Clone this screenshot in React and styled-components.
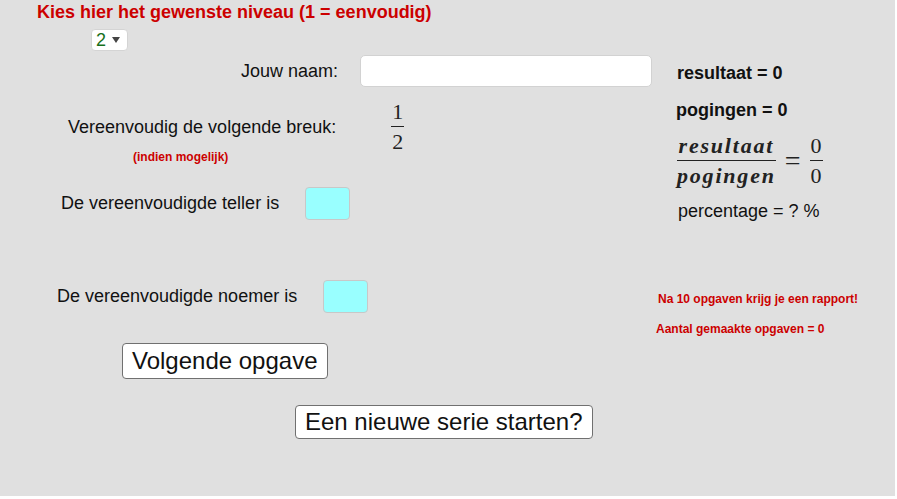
import React from 'react'
import styled, {createGlobalStyle} from 'styled-components'

const Global = createGlobalStyle`
    body {
        margin: 0;
        background: white;
        font-family: "Liberation Sans", Arial, sans-serif;
    }
`

export default function App()
{
    return (
        <>
            <Global />
            <Canvas>
                <LeftPane>
                    <Title>Kies hier het gewenste niveau (1 = eenvoudig)</Title>
                    <Select>
                        <SelectValue>2</SelectValue>
                        <Caret />
                    </Select>

                    <Row top={4} height={32} indent={241} gap={22}>
                        <Label>Jouw naam:</Label>
                        <NameInput />
                    </Row>

                    <Row top={14} height={52} indent={68} gap={55}>
                        <Label>Vereenvoudig de volgende breuk:</Label>
                        <Fraction size={22}>
                            <Num>1</Num>
                            <Den>2</Den>
                        </Fraction>
                    </Row>
                    <Hint top={-3} indent={133}>(indien mogelijk)</Hint>

                    <Row top={23} height={33} indent={61} gap={26}>
                        <Label>De vereenvoudigde teller is</Label>
                        <AnswerBox />
                    </Row>

                    <Row top={60} height={33} indent={57} gap={26}>
                        <Label>De vereenvoudigde noemer is</Label>
                        <AnswerBox />
                    </Row>

                    <Button top={30} indent={122} height={36}>Volgende opgave</Button>
                    <Button top={26} indent={295} height={34}>Een nieuwe serie starten?</Button>
                </LeftPane>

                <RightPane>
                    <Stat top={63} indent={21} bold>resultaat = 0</Stat>
                    <Stat top={17} indent={20} bold>pogingen = 0</Stat>
                    <Equation>
                        <Fraction size={22} italic>
                            <Num>resultaat</Num>
                            <Den>pogingen</Den>
                        </Fraction>
                        <Equals>=</Equals>
                        <Fraction size={22}>
                            <Num>0</Num>
                            <Den>0</Den>
                        </Fraction>
                    </Equation>
                    <Stat top={14} indent={22}>percentage = ? %</Stat>
                    <Hint top={71} indent={2}>Na 10 opgaven krijg je een rapport!</Hint>
                    <Hint top={16} indent={0}>Aantal gemaakte opgaven = 0</Hint>
                </RightPane>
            </Canvas>
        </>
    )
}


const Canvas = styled.div`
    width: 895px;
    height: 496px;
    background: #e0e0e0;
    display: flex;
    color: #111;
`
const LeftPane = styled.div`
    width: 656px;
    display: flex;
    flex-direction: column;
    align-items: flex-start;
`
const RightPane = styled.div`
    flex: 1;
    display: flex;
    flex-direction: column;
    align-items: flex-start;
`
const Title = styled.div`
    height: 24px;
    line-height: 24px;
    padding-left: 37px;
    font-size: 18px;
    font-weight: bold;
    color: #cc0000;
    white-space: nowrap;
`
const Select = styled.div`
    margin: 5px 0 0 91px;
    width: 37px;
    height: 22px;
    box-sizing: border-box;
    background: white;
    border: 1px solid #d4d4d4;
    border-radius: 4px;
    display: flex;
    align-items: center;
    padding-left: 4px;
    gap: 6px;
`
const SelectValue = styled.span`
    font-size: 18px;
    color: #17701a;
`
const Caret = styled.span`
    width: 0;
    height: 0;
    border-left: 4px solid transparent;
    border-right: 4px solid transparent;
    border-top: 6px solid #444;
`
const Row = styled.div`
    margin-top: ${p => p.top}px;
    height: ${p => p.height}px;
    padding-left: ${p => p.indent}px;
    display: flex;
    align-items: center;
    gap: ${p => p.gap}px;
`
const Label = styled.span`
    font-size: 18px;
    white-space: nowrap;
`
const NameInput = styled.div`
    width: 292px;
    height: 32px;
    box-sizing: border-box;
    background: white;
    border: 1px solid #d2d2d2;
    border-radius: 5px;
`
const AnswerBox = styled.div`
    width: 45px;
    height: 33px;
    box-sizing: border-box;
    background: #99ffff;
    border: 1px solid #c8c8c8;
    border-radius: 4px;
`
const Fraction = styled.div`
    display: inline-flex;
    flex-direction: column;
    align-items: center;
    font-family: "Liberation Serif", "DejaVu Serif", serif;
    font-size: ${p => p.size}px;
    font-style: ${p => p.italic ? 'italic' : 'normal'};
    font-weight: ${p => p.italic ? 'bold' : 'normal'};
    letter-spacing: ${p => p.italic ? '1.8px' : '0'};
    line-height: 1;
    color: #222;
`
const Num = styled.span`
    padding: 0 1px 3px;
    border-bottom: 1px solid #222;
    align-self: stretch;
    text-align: center;
`
const Den = styled.span`
    padding-top: 4px;
`
const Equation = styled.div`
    margin: 15px 0 0 21px;
    height: 52px;
    display: flex;
    align-items: center;
    gap: 9px;
`
const Equals = styled.span`
    font-family: "Liberation Serif", serif;
    font-size: 28px;
    color: #222;
`
const Stat = styled.div`
    margin-top: ${p => p.top}px;
    padding-left: ${p => p.indent}px;
    height: 20px;
    line-height: 20px;
    font-size: 18px;
    font-weight: ${p => p.bold ? 'bold' : 'normal'};
    white-space: nowrap;
`
const Hint = styled.div`
    margin-top: ${p => p.top}px;
    padding-left: ${p => p.indent}px;
    height: 14px;
    line-height: 14px;
    font-size: 12px;
    font-weight: bold;
    color: #cc0000;
    white-space: nowrap;
`
const Button = styled.button`
    margin: ${p => p.top}px 0 0 ${p => p.indent}px;
    height: ${p => p.height}px;
    padding: 0 9px;
    background: white;
    border: 1px solid #707070;
    border-radius: 4px;
    font-family: "Liberation Sans", Arial, sans-serif;
    font-size: 24px;
    color: #111;
    white-space: nowrap;
`
